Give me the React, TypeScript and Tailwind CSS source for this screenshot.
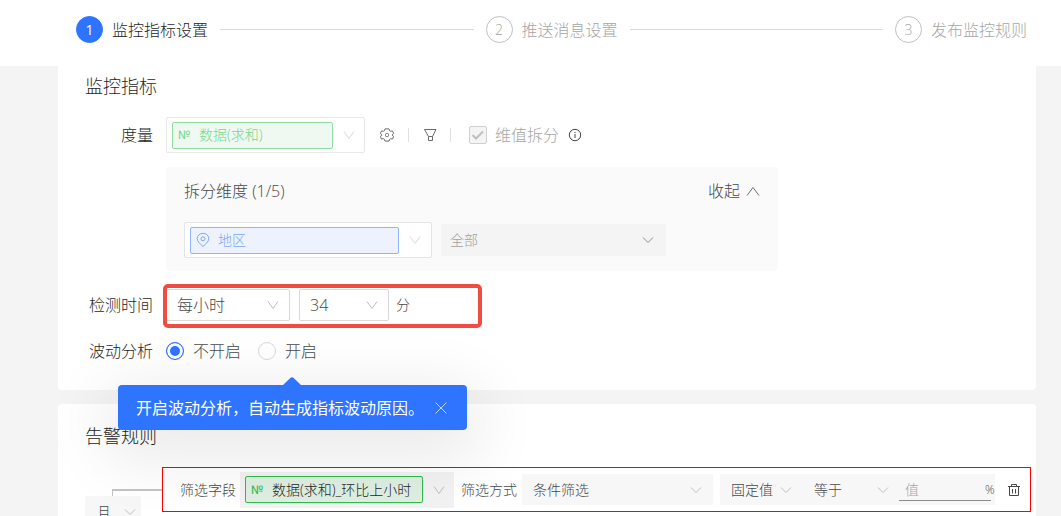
import { useState, type ReactNode } from "react";
import { clsx } from "clsx";

const STEPS = ["监控指标设置", "推送消息设置", "发布监控规则"];

function Chevron({ flat, className }: { flat?: boolean; className?: string }) {
  return (
    <svg
      viewBox="0 0 12 12"
      fill="none"
      stroke="currentColor"
      className={clsx("pointer-events-none size-3 shrink-0", className)}
      aria-hidden="true"
    >
      <path d={flat ? "M1 3.5l5 5 5-5" : "M1 2.5l5 7 5-7"} />
    </svg>
  );
}

type SelectBoxProps = {
  label: string;
  options: string[];
  className?: string;
  selectClassName?: string;
  chevronClassName?: string;
  flat?: boolean;
  disabled?: boolean;
};

function SelectBox({
  label,
  options,
  className,
  selectClassName,
  chevronClassName,
  flat,
  disabled,
}: SelectBoxProps) {
  return (
    <div className={clsx("relative flex items-center", className)}>
      <select
        aria-label={label}
        disabled={disabled}
        className={clsx(
          "h-full w-full appearance-none bg-transparent outline-none disabled:opacity-100",
          selectClassName
        )}
      >
        {options.map((o) => (
          <option key={o}>{o}</option>
        ))}
      </select>
      <Chevron flat={flat} className={clsx("absolute", chevronClassName)} />
    </div>
  );
}

type TagSelectProps = {
  label: string;
  value: string;
  icon: ReactNode;
  className?: string;
  tagClassName?: string;
  chevronClassName?: string;
  disabled?: boolean;
};

// Select whose current value is drawn as a coloured tag
function TagSelect({ label, value, icon, className, tagClassName, chevronClassName, disabled }: TagSelectProps) {
  return (
    <div className={clsx("flex h-9 shrink-0 items-center", className)}>
      <div className={clsx("flex h-[27px] min-w-0 flex-1 items-center rounded-[2px] border pl-[5px]", tagClassName)}>
        {icon}
        <select
          aria-label={label}
          disabled={disabled}
          className="min-w-0 flex-1 appearance-none bg-transparent text-sm outline-none disabled:opacity-100"
        >
          <option>{value}</option>
        </select>
      </div>
      <Chevron className={chevronClassName} />
    </div>
  );
}

function NumberMark() {
  return <span className="w-[21px] shrink-0 font-['Roboto',sans-serif] text-xs font-normal">№</span>;
}

function Pin() {
  return (
    <svg viewBox="0 0 14 16" fill="none" stroke="currentColor" className="mr-2 h-4 w-[14px] shrink-0" aria-hidden="true">
      <path d="M7 14.5C4 11.8 1.2 9.4 1.2 6.6a5.8 5.3 0 0 1 11.6 0c0 2.8-2.8 5.2-5.8 7.9z" />
      <circle cx="7" cy="6.8" r="2" />
    </svg>
  );
}

function Gear() {
  return (
    <svg viewBox="0 0 14 14" fill="none" stroke="currentColor" strokeLinejoin="round" className="size-[14px]" aria-hidden="true">
      <path d="M5 .9h4l.6 1.8 1 .6 1.8-.4 1.2 2.3L12.300 7l1.300 1.800-1.200 2.300-1.800-.4-1 .6-.6 1.800H5l-.6-1.800-1-.6-1.800.4L.4 8.800 1.700 7 .4 5.200l1.200-2.300 1.800.4 1-.6z" />
      <rect x="5.500" y="5.500" width="3" height="3" rx="1" />
    </svg>
  );
}

function Funnel() {
  return (
    <svg viewBox="0 0 14 14" fill="none" stroke="currentColor" strokeLinejoin="round" className="size-[14px]" aria-hidden="true">
      <path d="M1.500 1.500h11.500L9.500 8.500v4h-4v-4z" />
      <path d="M5.500 8.500h4" />
    </svg>
  );
}

function InfoMark() {
  return (
    <svg viewBox="0 0 14 14" fill="none" stroke="currentColor" className="size-[14px]" aria-hidden="true">
      <circle cx="7" cy="7" r="5.700" />
      <path d="M7 6v4M7 4v1.100" />
    </svg>
  );
}

function Trash() {
  return (
    <svg viewBox="0 0 14 14" fill="none" stroke="currentColor" className="size-[14px]" aria-hidden="true">
      <path d="M1 3.500h12M4.500 3.500v-2h5v2M2.500 3.500v9h9v-9M5.500 6v4.500M8.500 6v4.500" />
    </svg>
  );
}

function Row({ label, children }: { label: string; children: ReactNode }) {
  return (
    <div className="flex items-center gap-[13px]">
      <span className="w-[68px] shrink-0 text-right text-base text-[#1f1f1f]">{label}</span>
      {children}
    </div>
  );
}

export default function App() {
  const [fluctuation, setFluctuation] = useState("off");
  const [tipOpen, setTipOpen] = useState(true);
  const [expanded, setExpanded] = useState(true);

  return (
    <div className="h-screen overflow-hidden bg-[#f4f4f4] font-['Open_Sans','Noto_Sans_CJK_SC',sans-serif] font-light text-[#484848]">
      <header className="bg-white">
        <ol className="flex h-[66px] items-center pb-[7px] pl-[76px] pr-[34px]">
          {STEPS.map((step, i) => (
            <li key={step} className={clsx("flex items-center", i < STEPS.length - 1 && "flex-1")}>
              <span
                className={clsx(
                  "flex size-[27px] shrink-0 items-center justify-center rounded-full border text-sm",
                  i === 0 ? "border-[#2e74ff] bg-[#2e74ff] font-normal text-white" : "border-[#bfbfbf] text-[#a6a6a6]"
                )}
              >
                {i + 1}
              </span>
              <span className={clsx("ml-[9px] whitespace-nowrap text-base", i === 0 ? "text-[#1f1f1f]" : "text-[#a6a6a6]")}>
                {step}
              </span>
              {i < STEPS.length - 1 && <span className="mx-3 h-px flex-1 bg-[#d9d9d9]" />}
            </li>
          ))}
        </ol>
      </header>

      <main className="ml-[58px] mr-[25px] space-y-[14px]">
        <section className="rounded-b-[4px] bg-white pb-[27px] pl-[27px] pt-[6px]">
          <h2 className="mb-[17px] text-lg leading-7 text-[#1f1f1f]">监控指标</h2>

          <Row label="度量">
            <div className="flex items-center">
              <TagSelect
                label="度量"
                value="数据(求和)"
                icon={<NumberMark />}
                disabled
                className="w-[199px] rounded-[2px] border border-[#e8e8e8] pl-[5px] pr-[9px]"
                tagClassName="border-[#8fdda0] bg-[#eff9f2] text-[#76d78d]"
                chevronClassName="ml-[10px] text-[#d9d9d9]"
              />
              <button type="button" aria-label="设置" className="ml-[15px] text-[#6b6b6b]">
                <Gear />
              </button>
              <span className="mx-[14px] h-[14px] w-px bg-[#e0e0e0]" />
              <button type="button" aria-label="筛选" className="text-[#6b6b6b]">
                <Funnel />
              </button>
              <span className="ml-[13px] mr-[18px] h-[14px] w-px bg-[#e0e0e0]" />
              <label className="flex items-center gap-2 text-base text-[#a6a6a6]">
                <span className="relative flex">
                  <input
                    type="checkbox"
                    checked
                    disabled
                    readOnly
                    className="size-[18px] appearance-none rounded-[2px] border border-[#d0d0d0] bg-[#f4f4f4]"
                  />
                  <svg viewBox="0 0 18 18" fill="none" stroke="#bfbfbf" strokeWidth="2" className="absolute inset-0" aria-hidden="true">
                    <path d="M3.5 9l3.5 3.5 7-7" />
                  </svg>
                </span>
                维值拆分
              </label>
              <button type="button" aria-label="说明" className="ml-[9px]">
                <InfoMark />
              </button>
            </div>
          </Row>

          <div className="ml-[81px] mt-[14px] h-[104px] w-[612px] rounded-[4px] bg-[#fafafa] px-[18px] pt-3">
            <div className="flex items-center justify-between text-base leading-6">
              <span>拆分维度 (1/5)</span>
              <button type="button" onClick={() => setExpanded((e) => !e)} className="flex items-center gap-[6px]">
                收起
                <svg viewBox="0 0 14 12" fill="none" stroke="#737373" className="h-3 w-[14px]" aria-hidden="true">
                  <path d="M1 10.5l6-8 6 8" />
                </svg>
              </button>
            </div>
            {expanded && (
              <div className="mt-[19px] flex items-center gap-[9px]">
                <TagSelect
                  label="拆分维度"
                  value="地区"
                  icon={<Pin />}
                  disabled
                  className="w-[248px] rounded-[2px] border border-[#e4e4e4] bg-white pl-[5px] pr-[10px]"
                  tagClassName="border-[#91b5fb] bg-[#eef2fe] text-[#7ea8fa]"
                  chevronClassName="ml-[10px] text-[#d9d9d9]"
                />
                <SelectBox
                  label="维值"
                  options={["全部"]}
                  flat
                  disabled
                  className="h-8 w-[225px] bg-[#f4f4f4]"
                  selectClassName="pl-[9px] text-sm text-[#a0a0a0]"
                  chevronClassName="right-3 text-[#8c8c8c]"
                />
              </div>
            )}
          </div>

          <div className="mt-[18px]">
            <Row label="检测时间">
              <div className="relative flex items-center">
                <SelectBox
                  label="检测频率"
                  options={["每小时", "每天", "每周"]}
                  className="h-8 w-[124px] rounded-[2px] border border-[#d9d9d9]"
                  selectClassName="pl-[10px] text-base"
                  chevronClassName="right-[10px] text-[#bfbfbf]"
                />
                <SelectBox
                  label="分钟"
                  options={["34", "35", "36"]}
                  className="ml-[9px] h-8 w-[90px] rounded-[2px] border border-[#d9d9d9]"
                  selectClassName="pl-[10px] text-base"
                  chevronClassName="right-[10px] text-[#bfbfbf]"
                />
                <span className="ml-[7px] text-sm">分</span>
                <span className="pointer-events-none absolute -left-[3px] -top-[5px] h-11 w-[319px] rounded-[5px] border-4 border-[#f04d42]" />
              </div>
            </Row>
          </div>

          <div className="mt-[18px]">
            <Row label="波动分析">
              <div className="flex items-center gap-[17px] text-base leading-6">
                <label className="flex items-center gap-[9px]">
                  <input
                    type="radio"
                    name="fluctuation"
                    checked={fluctuation === "off"}
                    onChange={() => setFluctuation("off")}
                    className="size-[18px] appearance-none rounded-full border border-[#d9d9d9] bg-white checked:border-[#2e74ff] checked:bg-[#2e74ff] checked:shadow-[inset_0_0_0_3px_#fff]"
                  />
                  不开启
                </label>
                <div className="relative">
                  <label className="flex items-center gap-[9px]">
                    <input
                      type="radio"
                      name="fluctuation"
                      checked={fluctuation === "on"}
                      onChange={() => setFluctuation("on")}
                      className="size-[18px] appearance-none rounded-full border border-[#d9d9d9] bg-white checked:border-[#2e74ff] checked:bg-[#2e74ff] checked:shadow-[inset_0_0_0_3px_#fff]"
                    />
                    开启
                  </label>
                  {tipOpen && (
                    <div
                      role="tooltip"
                      className="absolute -left-[140px] top-[46px] z-10 flex h-[45px] w-[349px] items-center justify-between whitespace-nowrap rounded-[4px] bg-[#2e74ff] pl-[18px] pr-5 text-base font-normal text-white shadow-[0_16px_64px_12px_rgba(0,0,0,0.09)]"
                    >
                      <svg viewBox="0 0 20 9" fill="#2e74ff" className="absolute -top-2 left-[164px] h-[9px] w-5" aria-hidden="true">
                        <path d="M0 9L8.600 .8q1.400-1.200 2.800 0L20 9z" />
                      </svg>
                      开启波动分析，自动生成指标波动原因。
                      <button type="button" aria-label="关闭" onClick={() => setTipOpen(false)} className="text-[#c0d5ff]">
                        <svg viewBox="0 0 12 12" fill="none" stroke="currentColor" className="size-3" aria-hidden="true">
                          <path d="M.5.5l11 11M11.500.5l-11 11" />
                        </svg>
                      </button>
                    </div>
                  )}
                </div>
              </div>
            </Row>
          </div>
        </section>

        <section className="rounded-t-[4px] bg-white pb-10 pl-[27px] pr-[5px] pt-[18px]">
          <h2 className="mb-[17px] text-lg leading-7 text-[#1f1f1f]">告警规则</h2>

          <div className="flex">
            <div className="w-[77px] shrink-0 pt-[22px]">
              <div className="ml-[27px] h-[7px] border-l border-t-2 border-[#c4c4c4]" />
              <SelectBox
                label="条件关系"
                options={["且", "或"]}
                flat
                className="h-[31px] w-14 rounded-[2px] bg-[#f7f7f7]"
                selectClassName="pl-3 text-sm"
                chevronClassName="right-[5px] text-[#bfbfbf]"
              />
            </div>

            <div className="flex h-[45px] min-w-0 flex-1 items-center border border-[#f00] pl-[17px] pr-[9px] text-sm">
              <span className="shrink-0">筛选字段</span>
              <TagSelect
                label="筛选字段"
                value="数据(求和)_环比上小时"
                icon={<NumberMark />}
                className="ml-1 w-[214px] bg-[#f2f2f2] pl-[5px] pr-[9px] text-[#1f1f1f]"
                tagClassName="border-[#2fba4e] bg-[#deefe1] [&>span]:text-[#2fba4e]"
                chevronClassName="ml-[10px] text-[#bfbfbf]"
              />
              <span className="ml-[7px] shrink-0">筛选方式</span>
              <SelectBox
                label="筛选方式"
                options={["条件筛选"]}
                flat
                className="ml-[5px] h-[31px] min-w-0 flex-1 bg-[#f7f7f7]"
                selectClassName="pl-[11px]"
                chevronClassName="right-[11px] text-[#bfbfbf]"
              />
              <div className="ml-[7px] flex h-[31px] w-[275px] shrink-0 items-center bg-[#f7f7f7]">
                <SelectBox
                  label="值类型"
                  options={["固定值"]}
                  flat
                  className="h-full w-[83px]"
                  selectClassName="pl-[11px]"
                  chevronClassName="right-[11px] text-[#bfbfbf]"
                />
                <SelectBox
                  label="比较方式"
                  options={["等于", "大于", "小于"]}
                  flat
                  className="h-full w-24"
                  selectClassName="pl-[11px]"
                  chevronClassName="right-[10px] text-[#bfbfbf]"
                />
                <input
                  type="text"
                  aria-label="值"
                  placeholder="值"
                  className="h-[23px] w-[92px] border-b border-[#8c8c8c] bg-transparent pl-[6px] outline-none placeholder:text-[#a6a6a6]"
                />
                <span className="-ml-[6px] text-xs">%</span>
              </div>
              <button type="button" aria-label="删除" className="ml-3 shrink-0">
                <Trash />
              </button>
            </div>
          </div>
        </section>
      </main>
    </div>
  );
}
